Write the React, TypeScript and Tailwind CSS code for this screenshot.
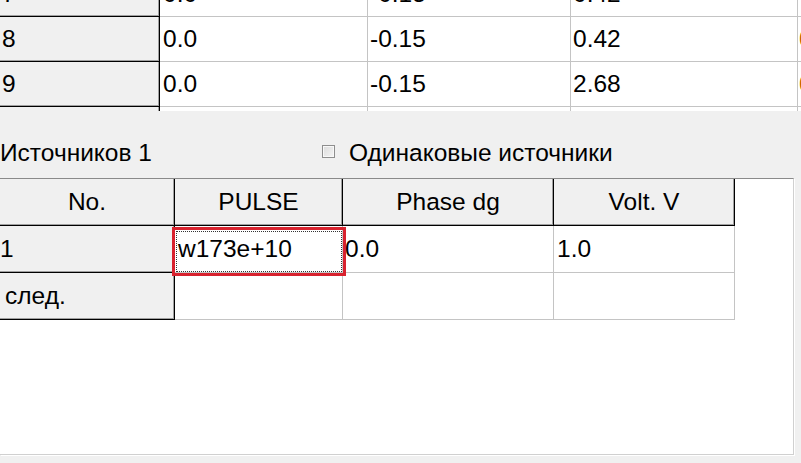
import type { ReactNode } from "react";

const topRows = [
  { no: "7", a: "0.0", b: "-0.15", c: "0.42", d: "0" },
  { no: "8", a: "0.0", b: "-0.15", c: "0.42", d: "0" },
  { no: "9", a: "0.0", b: "-0.15", c: "2.68", d: "0" },
  { no: "10", a: "0.0", b: "-0.15", c: "0.42", d: "0" },
];

const headCell = "bg-[#f0f0f0] border-r border-b border-black shadow-[inset_-1px_-1px_0_#a0a0a0]";
const dataCell = "bg-white border-r border-b border-[#c4c4c4]";

function Cell({ className, children }: { className: string; children?: ReactNode }) {
  return <div className={`flex items-center overflow-hidden whitespace-nowrap ${className}`}>{children}</div>;
}

export default function App() {
  return (
    <div className="relative h-[463px] w-[801px] overflow-hidden bg-[#f0f0f0] font-['Liberation_Sans',Arial,sans-serif] text-[24.5px] leading-[28px] text-black">
      {/* upper grid, scrolled so row 7 is cut */}
      <div className="h-[111px] overflow-hidden bg-white">
        <div className="-mt-[28px] flex flex-col">
          {topRows.map((r) => (
            <div key={r.no} className="flex h-[45px]">
              <Cell className={`${headCell} w-[160px] pl-[2px]`}>{r.no}</Cell>
              <Cell className={`${dataCell} w-[208px] pl-[3px]`}>{r.a}</Cell>
              <Cell className={`${dataCell} w-[203px] pl-[2px]`}>{r.b}</Cell>
              <Cell className={`${dataCell} w-[227px] pl-[2px]`}>{r.c}</Cell>
              <Cell className="flex-1 border-b border-[#c4c4c4] bg-white pl-[1px] text-[#c06000]">{r.d}</Cell>
            </div>
          ))}
        </div>
      </div>

      {/* sources bar */}
      <div className="flex h-[67px] items-start pt-[28px]">
        <span className="w-[322px]">Источников 1</span>
        <span className="mt-[6px] h-[13px] w-[13px] border border-[#8e8e8e] bg-gradient-to-br from-[#dcdcdc] to-[#f4f4f4] shadow-[inset_0_0_0_1px_#f8f8f8]" />
        <span className="ml-[14px]">Одинаковые источники</span>
      </div>

      {/* sources grid */}
      <div className="h-[277px] w-[794px] border-t border-r border-b border-t-[#8a8a8a] border-r-[#d0d0d0] border-b-[#d0d0d0] bg-white shadow-[1px_1px_0_#ffffff]">
        <div className="flex h-[47px]">
          <Cell className={`${headCell} w-[175px] justify-center`}>No.</Cell>
          <Cell className={`${headCell} w-[168px] justify-center`}>PULSE</Cell>
          <Cell className={`${headCell} w-[211px] justify-center`}>Phase dg</Cell>
          <Cell className={`${headCell} w-[181px] justify-center`}>Volt. V</Cell>
        </div>
        <div className="flex h-[47px]">
          <Cell className={`${headCell} w-[175px]`}>1</Cell>
          <div className={`relative flex w-[168px] items-center ${dataCell} pl-[3px]`}>
            w173e+10
            <div className="absolute -left-[3px] top-[1px] h-[49px] w-[174px] border-[3px] border-[#d8222e]">
              <div className="absolute inset-[1px] border border-dotted border-[#333]" />
            </div>
          </div>
          <Cell className={`${dataCell} w-[211px] pl-[2px]`}>0.0</Cell>
          <Cell className={`${dataCell} w-[181px] pl-[3px]`}>1.0</Cell>
        </div>
        <div className="flex h-[47px]">
          <Cell className={`${headCell} w-[175px] pl-[5px]`}>след.</Cell>
          <Cell className={`${dataCell} w-[168px]`} />
          <Cell className={`${dataCell} w-[211px]`} />
          <Cell className={`${dataCell} w-[181px]`} />
        </div>
      </div>
    </div>
  );
}
